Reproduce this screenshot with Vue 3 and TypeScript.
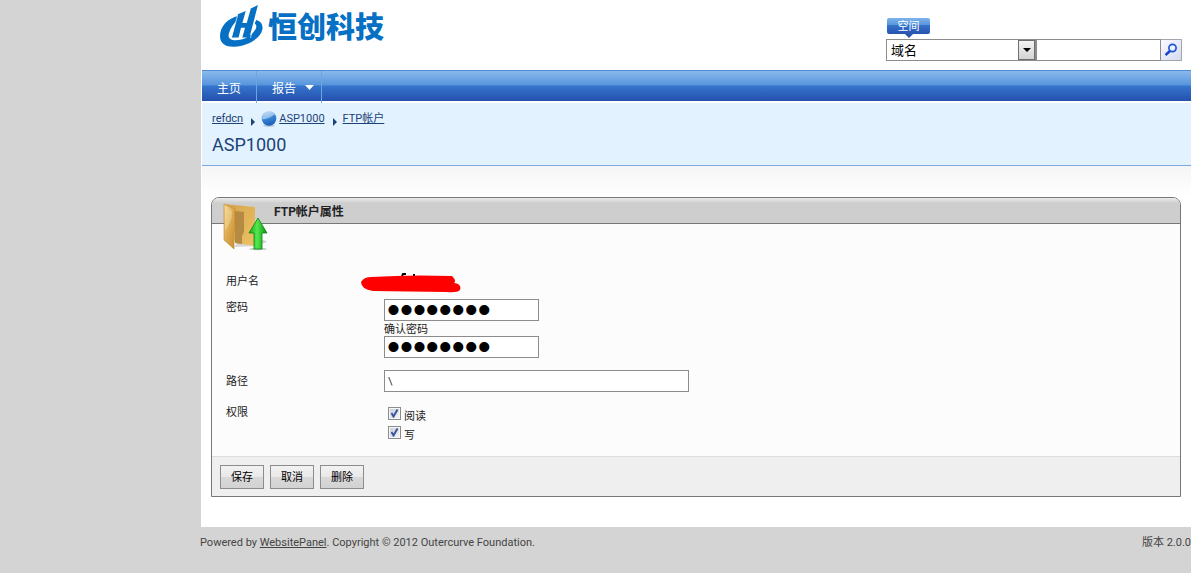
<script setup lang="ts">
import { ref } from 'vue'

const searchType = ref('域名')
const searchText = ref('')
const password = ref('password')
const confirmPassword = ref('password')
const path = ref('\\')
const canRead = ref(true)
const canWrite = ref(true)
const actions = ['保存', '取消', '删除']
</script>

<template>
  <div class="page">
    <div class="sheet">
      <header class="top">
        <a class="brand" href="#">
          <svg class="mark" viewBox="75 15 127 124" aria-hidden="true">
            <g fill="#0670c4">
              <path d="M130 47C97 54 75 80 75 107C75 130 94 139 118 138C157 136 194 114 200 88C203 72 195 62 182 59L177 69C184 74 184 81 177 91C166 107 144 119 122 119C103 119 97 110 102 97C106 83 115 69 127 60Z" />
              <path d="M128 42L151 33L141 68H154L166 25L187 15L162 111H141L149 82H137L130 111H110Z" />
            </g>
            <path d="M127 46L108 112" fill="none" stroke="#fff" stroke-width="2" />
            <path d="M183 46L165 112" fill="none" stroke="#fff" stroke-width="2" />
          </svg>
          <span>恒创科技</span>
        </a>
        <form class="search" @submit.prevent>
          <div class="tab">空间</div>
          <div class="search-row">
            <div class="select-wrap">
              <select v-model="searchType" aria-label="搜索类型">
                <option>域名</option>
              </select>
              <span class="drop"><svg viewBox="0 0 8 4" aria-hidden="true"><path d="M0 0H8L4 4Z" /></svg></span>
            </div>
            <input v-model="searchText" type="text" aria-label="搜索" />
            <button type="submit" aria-label="查找">
              <svg viewBox="0 0 14 14" aria-hidden="true">
                <circle cx="8.5" cy="5" r="3.6" fill="#eef3ff" stroke="#1d55d8" stroke-width="1.7" />
                <path d="M6 8L1.5 12" stroke="#1648cc" stroke-width="2.4" />
              </svg>
            </button>
          </div>
        </form>
      </header>

      <nav class="menu">
        <a href="#">主页</a>
        <a href="#">报告<svg viewBox="0 0 9 5" aria-hidden="true"><path d="M0 0H9L4.500 5Z" fill="#fff" /></svg></a>
      </nav>

      <section class="location">
        <div class="crumbs">
          <a href="#">refdcn</a>
          <svg class="arrow" viewBox="0 0 4 8" aria-hidden="true"><path d="M0 0L4 4L0 8Z" /></svg>
          <svg class="globe" viewBox="0 0 16 16" aria-hidden="true">
            <defs>
              <linearGradient id="globe-fill" x1="0" y1="0" x2="0.300" y2="1">
                <stop offset="0" stop-color="#b9d8f5" />
                <stop offset="0.500" stop-color="#3f8bd8" />
                <stop offset="1" stop-color="#1e62bb" />
              </linearGradient>
            </defs>
            <ellipse cx="8" cy="14.600" rx="6" ry="1.300" fill="#b5c7d8" />
            <circle cx="8" cy="7.500" r="7.300" fill="url(#globe-fill)" />
            <path d="M1 8Q7 9 14 3Q11 0 7 0.500Q1 2 1 8Z" fill="#d6e9fb" opacity="0.550" />
          </svg>
          <a href="#">ASP1000</a>
          <svg class="arrow" viewBox="0 0 4 8" aria-hidden="true"><path d="M0 0L4 4L0 8Z" /></svg>
          <a href="#">FTP帐户</a>
        </div>
        <h1>ASP1000</h1>
      </section>

      <main>
        <form class="panel" @submit.prevent>
          <div class="panel-head">
            <svg class="folder" viewBox="0 0 46 48" aria-hidden="true">
              <defs>
                <linearGradient id="folder-back" x1="0" y1="0" x2="1" y2="1">
                  <stop offset="0" stop-color="#d3a24b" />
                  <stop offset="1" stop-color="#edc266" />
                </linearGradient>
                <linearGradient id="folder-front" x1="0" y1="0" x2="1" y2="1">
                  <stop offset="0" stop-color="#f5d792" />
                  <stop offset="0.500" stop-color="#dba94e" />
                  <stop offset="1" stop-color="#c98d31" />
                </linearGradient>
                <linearGradient id="up" x1="0" y1="0" x2="1" y2="0">
                  <stop offset="0" stop-color="#14a51c" />
                  <stop offset="0.450" stop-color="#55e84e" />
                  <stop offset="1" stop-color="#078b12" />
                </linearGradient>
              </defs>
              <path d="M12 44L16 39L42 37L45 39L34 43Z" fill="#bbb" opacity="0.600" />
              <ellipse cx="36" cy="46" rx="9" ry="1.200" fill="#aaa" opacity="0.700" />
              <path d="M2 1L33 4V43L13 40Z" fill="url(#folder-back)" />
              <path d="M13 8L22 9V29L20 33V41L13 40Z" fill="#b58a42" />
              <path d="M2 1L13 6V26L12 29V46L2 37Z" fill="url(#folder-front)" stroke="#bd8731" stroke-width="0.600" />
              <path d="M3 3L10 8V14Q7 24 3 27Z" fill="#fff0c9" opacity="0.300" />
              <path d="M36 15L45 30H40V46H32V30H27Z" fill="url(#up)" stroke="#07880f" stroke-width="0.800" />
            </svg>
            <h2>FTP帐户属性</h2>
          </div>
          <div class="fields">
            <div class="row user">
              <span>用户名</span>
              <div class="value">
                <svg class="scribble" viewBox="0 0 100 20" aria-hidden="true">
                  <path d="M41 3L42 1H45M53 1V4" fill="none" stroke="#000" stroke-width="2" />
                  <path d="M0 9Q3 4 10 4L35 3Q55 2 91 3Q96 8 93 10Q101 11 99 17Q96 20 86 19L12 18Q0 16 0 9Z" fill="#f00" />
                </svg>
              </div>
            </div>
            <div class="row secret">
              <label for="password">密码</label>
              <div class="value">
                <input id="password" v-model="password" class="text dots" type="password" />
                <label class="confirm" for="confirm">确认密码</label>
                <input id="confirm" v-model="confirmPassword" class="text dots" type="password" />
              </div>
            </div>
            <div class="row path">
              <label for="path">路径</label>
              <div class="value"><input id="path" v-model="path" class="text wide" type="text" /></div>
            </div>
            <div class="row rights">
              <span>权限</span>
              <div class="value">
                <label class="check"><input v-model="canRead" type="checkbox" /><span>阅读</span></label>
                <label class="check"><input v-model="canWrite" type="checkbox" /><span>写</span></label>
              </div>
            </div>
          </div>
          <div class="panel-foot">
            <button v-for="action in actions" :key="action" type="button">{{ action }}</button>
          </div>
        </form>
      </main>
    </div>
    <footer class="credits">
      <span>Powered by <a href="#">WebsitePanel</a>. Copyright © 2012 Outercurve Foundation.</span>
      <span>版本 2.0.0</span>
    </footer>
  </div>
</template>

<style>
body {
  margin: 0;
  background: #d4d4d4;
}
</style>

<style scoped>
.page {
  padding-left: 200px;
  font-family: Tahoma, Roboto, "Noto Sans CJK SC", sans-serif;
  font-size: 11px;
  line-height: 18px;
  color: #222;
}
.page *,
.page {
  box-sizing: border-box;
}
button,
input,
select {
  margin: 0;
  font: inherit;
  color: inherit;
}
svg {
  display: block;
}
.sheet {
  margin-left: 1px;
  padding-left: 1px;
  background: #fff;
}
.top {
  display: flex;
  justify-content: space-between;
  height: 70px;
  padding: 5px 9px 0 18px;
}
.brand {
  display: flex;
  gap: 5px;
  height: 42px;
  color: #0670c4;
  font-family: "Noto Sans CJK SC", sans-serif;
  font-size: 29px;
  font-weight: 900;
  line-height: 40px;
  text-decoration: none;
}
.mark {
  width: 43px;
  height: 42px;
}
.search {
  width: 296px;
  padding-top: 13px;
}
.tab {
  position: relative;
  width: 43px;
  height: 16px;
  margin: 0 0 5px 1px;
  border-radius: 2px;
  background: linear-gradient(#7fb3ea, #5795dc 44%, #3573cb 45%, #2853b0);
  color: #fff;
  line-height: 17px;
  text-align: center;
}
.tab::after {
  content: "";
  position: absolute;
  left: 18px;
  top: 16px;
  border: 4px solid transparent;
  border-top-color: #2853b0;
  border-bottom: 0;
}
.search-row {
  display: flex;
  height: 22px;
}
.select-wrap {
  position: relative;
  width: 151px;
}
.select-wrap select {
  appearance: none;
  width: 100%;
  height: 22px;
  padding: 1px 20px 0 4px;
  border: 1px solid #8c8c8c;
  border-right-width: 2px;
  border-radius: 0;
  background: #fff;
  color: #000;
  font-size: 13px;
}
.drop {
  position: absolute;
  top: 1px;
  right: 2px;
  display: grid;
  place-items: center;
  width: 17px;
  height: 20px;
  border: 1px solid #707070;
  background: linear-gradient(#f3f3f3, #d4d4d4);
  pointer-events: none;
}
.drop svg {
  width: 8px;
  height: 4px;
}
.search-row > input {
  flex: 1;
  min-width: 0;
  border: 1px solid #8c8c8c;
  border-left: 0;
  border-radius: 0;
}
.search-row > button {
  display: grid;
  place-items: center;
  width: 21px;
  padding: 0;
  border: 1px solid #a5a5ad;
  border-left: 0;
  background: linear-gradient(135deg, #fafaff, #d5daee);
}
.search-row > button svg {
  width: 14px;
  height: 14px;
}
.menu {
  display: flex;
  height: 31px;
  border-top: 1px solid #4d8bd6;
  background: linear-gradient(#8ab9ec, #5795dc 14px, #3675cc 15px, #2450ad);
}
.menu a {
  display: flex;
  align-items: center;
  gap: 9px;
  height: 32px;
  padding: 3px 15px 0;
  border-right: 1px solid #6ba5e3;
  color: #fff;
  font-size: 12px;
  text-decoration: none;
}
.menu a + a {
  padding-right: 7px;
}
.menu svg {
  width: 9px;
  height: 5px;
  margin-bottom: 2px;
}
.location {
  height: 63px;
  margin-top: 2px;
  padding: 7px 10px 0;
  border-bottom: 1px solid #7ba9dc;
  background: #e3f2ff;
  color: #1c4278;
}
.crumbs {
  display: flex;
  align-items: center;
  height: 17px;
}
.crumbs a {
  color: inherit;
}
.arrow {
  width: 4px;
  height: 8px;
  margin: 6px 6px 0 8px;
  fill: #1c4278;
}
.globe {
  width: 16px;
  height: 16px;
  margin-right: 2px;
}
h1 {
  margin: 6px 0 0;
  font-size: 18px;
  font-weight: 400;
  line-height: 23px;
}
main {
  padding: 31px 10px 30px 9px;
  background: linear-gradient(#f5f5f5, #fff 30px);
}
.panel {
  border: 1px solid #777;
  border-radius: 8px 8px 0 0;
  background: #fcfcfc;
}
.panel-head {
  position: relative;
  height: 26px;
  padding-left: 62px;
  border-bottom: 1px solid #777;
  border-radius: 7px 7px 0 0;
  background: linear-gradient(#ececec, #cecece 5px);
}
.folder {
  position: absolute;
  left: 10px;
  top: 5px;
  width: 46px;
  height: 48px;
}
h2 {
  margin: 0;
  font-size: 12px;
  font-weight: 700;
  line-height: 28px;
}
.fields {
  padding: 49px 14px 14px;
}
.row {
  display: grid;
  grid-template-columns: 158px 1fr;
}
.user {
  height: 26px;
}
.user .value {
  position: relative;
}
.scribble {
  position: absolute;
  left: -23px;
  top: 0;
  width: 100px;
  height: 20px;
}
.secret {
  height: 71px;
}
.path {
  height: 22px;
}
.path label {
  padding-top: 3px;
}
.rights {
  padding-top: 12px;
}
.text {
  display: block;
  width: 155px;
  height: 22px;
  padding: 0 3px;
  border: 1px solid #8c8c8c;
  border-radius: 0;
  background: #fff;
  color: #333;
}
.dots {
  padding: 0 2px;
  color: #000;
  font-family: "Liberation Sans", Arial, sans-serif;
  font-size: 37px;
  line-height: 20px;
}
.wide {
  width: 305px;
}
.confirm {
  display: block;
  height: 15px;
}
.check {
  display: flex;
  align-items: flex-start;
  gap: 3px;
  height: 19px;
  padding-left: 4px;
}
.check span {
  padding-top: 4px;
}
.check input {
  appearance: none;
  width: 13px;
  height: 13px;
  margin-top: 3px;
  border: 1px solid #8c8c8c;
  background: linear-gradient(135deg, #c9ced6, #f6f6f6);
  box-shadow: inset 0 0 0 1px #f6f6f6;
}
.check input:checked {
  background: url("data:image/svg+xml,%3Csvg xmlns='http://www.w3.org/2000/svg' viewBox='0 0 11 11'%3E%3Cpath d='M2.500 5L4.500 8.500L8.500 1.500' fill='none' stroke='%233b55a0' stroke-width='2'/%3E%3C/svg%3E"), linear-gradient(135deg, #c9ced6, #f6f6f6);
}
.panel-foot {
  display: flex;
  gap: 6px;
  height: 40px;
  padding: 8px;
  border-top: 1px solid #ddd;
  background: #efefef;
}
.panel-foot button {
  width: 44px;
  height: 24px;
  padding: 2px 0 0;
  border: 1px solid #8c8c8c;
  border-radius: 0;
  background: linear-gradient(#f2f2f2, #e9e9e9 48%, #d9d9d9 50%, #d2d2d2);
  color: #000;
}
.credits {
  display: flex;
  justify-content: space-between;
  padding-top: 7px;
  color: #444;
}
.credits a {
  color: inherit;
}
</style>
